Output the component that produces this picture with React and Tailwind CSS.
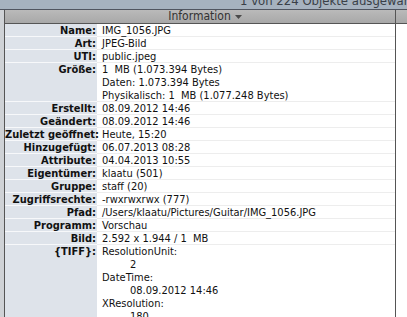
const rows = [
  { label: "Name:", lines: ["IMG_1056.JPG"] },
  { label: "Art:", lines: ["JPEG-Bild"] },
  { label: "UTI:", lines: ["public.jpeg"] },
  {
    label: "Größe:",
    lines: ["1  MB (1.073.394 Bytes)", "Daten: 1.073.394 Bytes", "Physikalisch: 1  MB (1.077.248 Bytes)"],
  },
  { label: "Erstellt:", lines: ["08.09.2012 14:46"] },
  { label: "Geändert:", lines: ["08.09.2012 14:46"] },
  { label: "Zuletzt geöffnet:", lines: ["Heute, 15:20"] },
  { label: "Hinzugefügt:", lines: ["06.07.2013 08:28"] },
  { label: "Attribute:", lines: ["04.04.2013 10:55"] },
  { label: "Eigentümer:", lines: ["klaatu (501)"] },
  { label: "Gruppe:", lines: ["staff (20)"] },
  { label: "Zugriffsrechte:", lines: ["-rwxrwxrwx (777)"] },
  { label: "Pfad:", lines: ["/Users/klaatu/Pictures/Guitar/IMG_1056.JPG"] },
  { label: "Programm:", lines: ["Vorschau"] },
  { label: "Bild:", lines: ["2.592 x 1.944 / 1  MB"] },
];

const tiff = [
  { text: "ResolutionUnit:", indent: false },
  { text: "2", indent: true },
  { text: "DateTime:", indent: false },
  { text: "08.09.2012 14:46", indent: true },
  { text: "XResolution:", indent: false },
  { text: "180", indent: true },
];

function Row({ label, children }) {
  return (
    <div className="flex">
      <div className="w-[92px] shrink-0 bg-[#dee3ea] pr-[1px] text-right font-bold whitespace-nowrap shadow-[inset_0_-1px_0_#f7f8fa]">
        {label}
      </div>
      <div className="flex-1 pl-[5px] whitespace-pre shadow-[inset_0_-1px_0_#ededed]">{children}</div>
    </div>
  );
}

export default function App() {
  return (
    <div className="h-[317px] w-[407px] overflow-hidden bg-white font-['DejaVu_Sans_Condensed','DejaVu_Sans',sans-serif] text-[11px] leading-[13px] text-[#111]">
      <div className="h-[10px] overflow-hidden border-b border-[#505560] bg-[#a6b2bf]">
        <div className="-mt-[6px] pl-[240px] text-[13px] leading-[13px] whitespace-nowrap text-[#3a3f47]">
          1 von 224 Objekte ausgewählt
        </div>
      </div>

      <div className="flex h-[307px]">
        <div className="w-[5px] shrink-0 border-r border-[#555] bg-[#cfd2d6]" />
        <div className="flex w-[390px] shrink-0 flex-col">
          <div className="flex h-[14px] shrink-0 items-center justify-center gap-[4px] border-b border-[#555] bg-gradient-to-b from-[#bababa] to-[#a8a8a8] text-[12px] text-[#333]">
            <span className="pl-[10px]">Information</span>
            <svg width="7" height="4" viewBox="0 0 7 4" className="mt-[1px]">
              <path d="M0 0h7L3.5 4z" fill="#4a4a4a" />
            </svg>
          </div>
          <div className="flex-1 overflow-hidden">
            {rows.map((r) => (
              <Row key={r.label} label={r.label}>
                {r.lines.map((l) => (
                  <div key={l}>{l}</div>
                ))}
              </Row>
            ))}
            <div className="flex h-full">
              <div className="w-[92px] shrink-0 bg-[#dee3ea] pr-[1px] text-right font-bold">{"{TIFF}:"}</div>
              <div className="flex-1 pl-[5px]">
                {tiff.map((t, i) => (
                  <div key={i} className={t.indent ? "pl-[28px]" : ""}>
                    {t.text}
                  </div>
                ))}
              </div>
            </div>
          </div>
        </div>
        <div className="flex-1 border-l border-[#555]">
          <div className="h-[14px] border-b border-[#555] bg-gradient-to-b from-[#bababa] to-[#a8a8a8]" />
        </div>
      </div>
    </div>
  );
}
